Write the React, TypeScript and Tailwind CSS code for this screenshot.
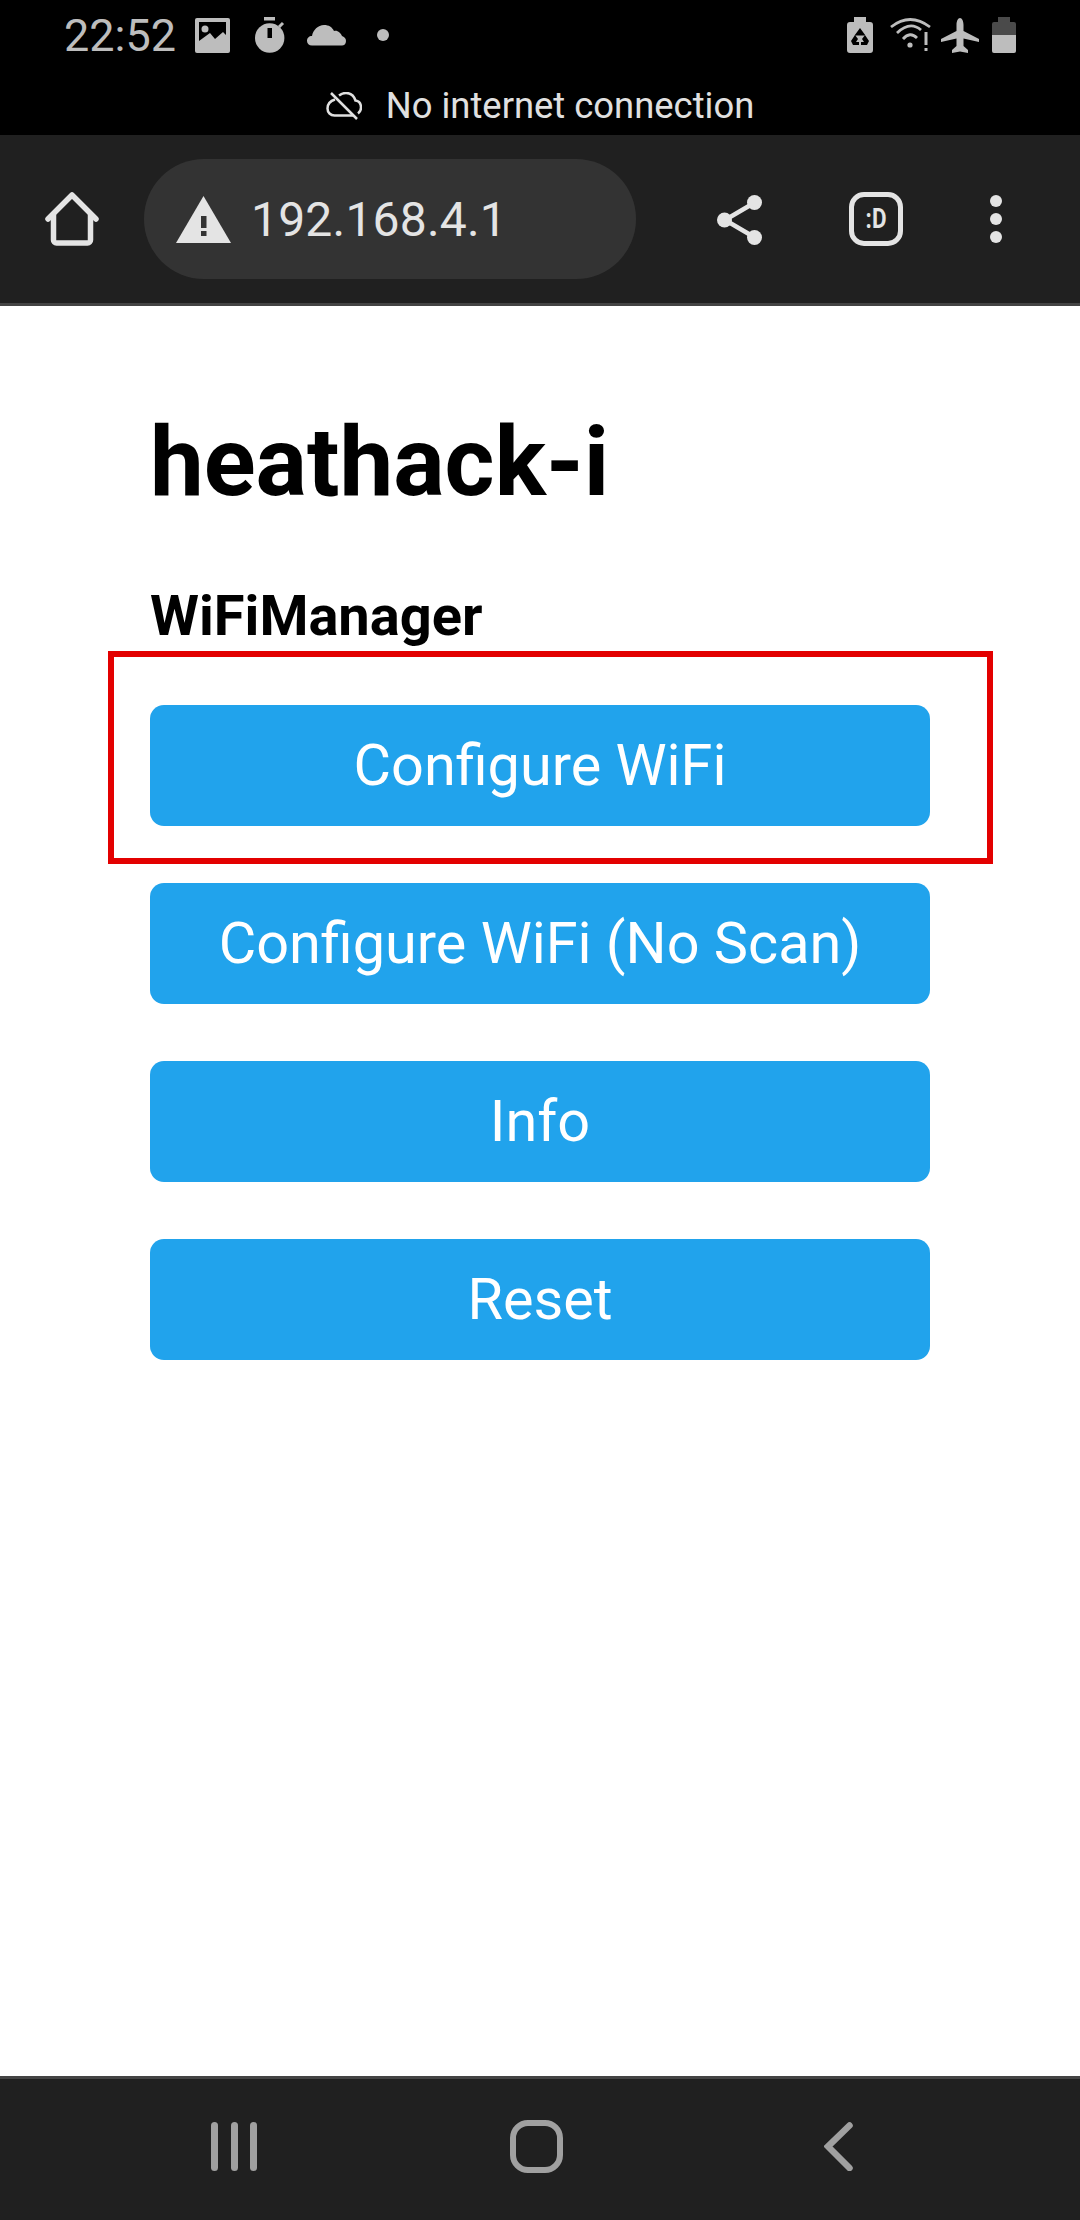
import React from 'react';

const buttons = ['Configure WiFi', 'Configure WiFi (No Scan)', 'Info', 'Reset'];

function StatusIcons() {
  return (
    <div className="flex items-center h-[70px] pl-[64px] pr-[64px] text-[#bdbdbd]">
      <span className="w-[131px] text-[45px] leading-none mt-[1px]">22:52</span>
      <svg width="35" height="35" viewBox="0 0 35 35">
        <rect width="35" height="35" rx="2" fill="#bdbdbd" />
        <path d="M4 4h27v13l-3-3-8 7-5-6-11 8z" fill="#000" />
        <circle cx="10" cy="11" r="3.500" fill="#bdbdbd" />
      </svg>
      <svg className="ml-[25px]" width="30" height="36" viewBox="0 0 30 36">
        <rect x="9" y="0" width="11" height="3.500" fill="#bdbdbd" />
        <circle cx="14.700" cy="21" r="14.700" fill="#bdbdbd" />
        <path d="M24 10l4-4" stroke="#bdbdbd" strokeWidth="3" />
        <rect x="12.500" y="11" width="4.500" height="10" fill="#000" />
      </svg>
      <svg className="ml-[22px]" width="39" height="22" viewBox="0 0 39 22">
        <path d="M5 21.500C2 21.500 0 19.500 0 17c0-3 2-5 5-5 1-6 6-11 12-11 5 0 8 2 10 6 1 0 2-.5 3 0 3 1 4 3 5 5 2 1 4 2 4 5 0 3-2 4.500-4 4.500z" fill="#bdbdbd" />
      </svg>
      <span className="ml-[31px] w-[12px] h-[12px] rounded-full bg-[#bdbdbd]" />
      <div className="flex-1" />
      <svg width="26" height="36" viewBox="0 0 26 36">
        <path d="M7 0h12v5h4a3 3 0 0 1 3 3v25a3 3 0 0 1-3 3H3a3 3 0 0 1-3-3V8a3 3 0 0 1 3-3h4z" fill="#bdbdbd" />
        <path d="M13 11l5.500 7.500h-11zM4 24l4-6 3 4-2 3h3v3H6zM22 24l-4-6-3 4 2 3h-3v3h6z" fill="#000" />
      </svg>
      <svg className="ml-[17px]" width="41" height="36" viewBox="0 0 41 36" fill="none" stroke="#bdbdbd" strokeWidth="2.800">
        <path d="M1 10Q20 -5 40 10" />
        <path d="M7 16Q20 3.500 31 13" />
        <path d="M13 22Q20 14 27 21" />
        <circle cx="20" cy="28" r="2.600" fill="#bdbdbd" stroke="none" />
        <path d="M36 15v13" strokeWidth="3" />
        <path d="M36 31v3" strokeWidth="3" />
      </svg>
      <svg className="ml-[10px]" width="38" height="35" viewBox="0 0 38 35">
        <path d="M19 0c2 0 3.500 3 3.500 7v6L38 21v3l-15.500-3.500V28l4.500 4v3l-8-1.500-8 1.500v-3l4.500-4v-7.500L0 24v-3l15.500-8V7c0-4 1.500-7 3.500-7z" fill="#bdbdbd" />
      </svg>
      <svg className="ml-[13px]" width="24" height="36" viewBox="0 0 24 36">
        <path d="M6 0h12v5h4a2 2 0 0 1 2 2v11H0V7a2 2 0 0 1 2-2h4z" fill="#4a4a4a" />
        <path d="M0 18h24v16a2 2 0 0 1-2 2H2a2 2 0 0 1-2-2z" fill="#bdbdbd" />
      </svg>
    </div>
  );
}

function Toolbar() {
  return (
    <div className="flex items-center h-[171px] pl-[45px] bg-[#202020] border-b-[3px] border-[#444444]">
      <svg width="54" height="54" viewBox="0 0 54 54" fill="none" stroke="#e4e4e4" strokeWidth="5.500" strokeLinecap="round" strokeLinejoin="round">
        <path d="M3 27L27 3l24 24" />
        <path d="M8.500 23v25a3 3 0 0 0 3 3h31a3 3 0 0 0 3-3V23" />
      </svg>
      <div className="ml-[45px] w-[492px] h-[120px] rounded-full bg-[#333333] flex items-center pl-[32px]">
        <svg width="55" height="47" viewBox="0 0 55 47">
          <path d="M27.500 0L55 47H0z" fill="#e4e4e4" />
          <rect x="25" y="20" width="5.500" height="12" fill="#333333" />
          <rect x="25" y="35" width="5.500" height="5" fill="#333333" />
        </svg>
        <span className="ml-[20px] mt-[1px] text-[48px] leading-none text-[#e4e4e4] tracking-[0.2px]">192.168.4.1</span>
      </div>
      <svg className="ml-[81px] mt-[2px]" width="45" height="50" viewBox="0 0 45 50" fill="#e4e4e4" stroke="#e4e4e4">
        <path d="M37 8L8 25l29 17" fill="none" strokeWidth="4.500" />
        <circle cx="7.500" cy="25" r="7.500" stroke="none" />
        <circle cx="37.500" cy="7.500" r="7.500" stroke="none" />
        <circle cx="37.500" cy="42.500" r="7.500" stroke="none" />
      </svg>
      <div className="ml-[87px] w-[54px] h-[54px] rounded-[15px] border-[5px] border-[#e4e4e4] flex items-center justify-center">
        <span className="text-[28px] font-bold leading-none text-[#e4e4e4] scale-x-[0.8]">:D</span>
      </div>
      <div className="ml-[87px] flex flex-col gap-[6px]">
        <span className="w-[12px] h-[12px] rounded-full bg-[#e4e4e4]" />
        <span className="w-[12px] h-[12px] rounded-full bg-[#e4e4e4]" />
        <span className="w-[12px] h-[12px] rounded-full bg-[#e4e4e4]" />
      </div>
    </div>
  );
}

export default function App() {
  return (
    <div className="w-[1080px] h-[2220px] flex flex-col bg-white overflow-hidden font-['Roboto',sans-serif]">
      <div className="h-[135px] bg-black">
        <StatusIcons />
        <div className="mt-[18px] flex items-center justify-center h-[36px]">
          <svg width="36" height="28" viewBox="0 0 36 28" fill="none" stroke="#e0e0e0" strokeWidth="2.500">
            <path d="M9 7.500C4 9 1.500 12.500 1.500 16.500c0 4 3 7 7 7H27" />
            <path d="M13 3.500c2-1.500 4-2.500 7-2.500 5 0 8 3 9.500 7.500 3.500.5 5.500 3.500 5.500 7 0 2.500-1 4.500-3 6" />
            <path d="M5 1l26 26" />
          </svg>
          <span className="ml-[24px] text-[36.4px] leading-none text-[#e0e0e0]">No internet connection</span>
        </div>
      </div>
      <Toolbar />
      <div className="flex-1 px-[150px] pt-[108px]">
        <h1 className="text-[96px] font-bold leading-none text-black">heathack-i</h1>
        <h3 className="mt-[78px] text-[56px] font-bold leading-none text-black">WiFiManager</h3>
        <div className="mt-[61px] flex flex-col gap-[57px]">
          {buttons.map((label, i) => (
            <div key={label} className="relative">
              <div className="h-[121px] rounded-[14px] bg-[#21a3ec] flex items-center justify-center text-white text-[57.6px] leading-none">
                {label}
              </div>
              {i === 0 && (
                <div className="absolute left-[-42px] top-[-54px] w-[885px] h-[213px] border-[6px] border-[#e30000]" />
              )}
            </div>
          ))}
        </div>
      </div>
      <div className="h-[144px] bg-[#202020] border-t-[3px] border-[#444444] flex items-center pl-[211px] pb-[6px]">
        <div className="flex gap-[12.5px]">
          <span className="w-[7px] h-[49px] rounded-full bg-[#a0a0a0]" />
          <span className="w-[7px] h-[49px] rounded-full bg-[#a0a0a0]" />
          <span className="w-[7px] h-[49px] rounded-full bg-[#a0a0a0]" />
        </div>
        <div className="ml-[253px] w-[53px] h-[53px] rounded-[18px] border-[6px] border-[#a0a0a0]" />
        <svg className="ml-[261px]" width="29" height="49" viewBox="0 0 29 49" fill="none" stroke="#a0a0a0" strokeWidth="6.500" strokeLinecap="round">
          <path d="M25.500 3.500L4 24.500 25.500 46" />
        </svg>
      </div>
    </div>
  );
}
